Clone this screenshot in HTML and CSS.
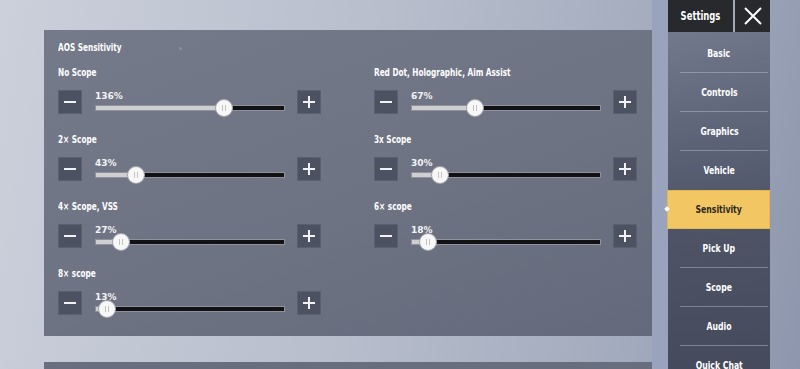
FILE: index.html
```html
<!DOCTYPE html>
<html>

<head>
    <meta charset="utf-8">
    <meta name="viewport" content="width=device-width, initial-scale=1">
    <title>Settings - Sensitivity</title>
    <link rel="stylesheet" href="styles.css">
</head>

<body>
    <div class="screen">
        <div class="main">
            <div class="panel">
                <div class="panel-title"><span class="narrow">AOS Sensitivity</span><span class="dot"></span></div>
                <div class="grid">
                    <div class="setting">
                        <div class="label">No Scope</div>
                        <div class="controls">
                            <button class="step minus"></button>
                            <div class="slider">
                                <span class="value">136%</span>
                                <div class="track"><div class="fill" style="width:68%"></div></div>
                                <span class="knob" style="left:68%"></span>
                            </div>
                            <button class="step plus"></button>
                        </div>
                    </div>
                    <div class="setting">
                        <div class="label">Red Dot, Holographic, Aim Assist</div>
                        <div class="controls">
                            <button class="step minus"></button>
                            <div class="slider">
                                <span class="value">67%</span>
                                <div class="track"><div class="fill" style="width:33.5%"></div></div>
                                <span class="knob" style="left:33.5%"></span>
                            </div>
                            <button class="step plus"></button>
                        </div>
                    </div>
                    <div class="setting">
                        <div class="label">2× Scope</div>
                        <div class="controls">
                            <button class="step minus"></button>
                            <div class="slider">
                                <span class="value">43%</span>
                                <div class="track"><div class="fill" style="width:21.5%"></div></div>
                                <span class="knob" style="left:21.5%"></span>
                            </div>
                            <button class="step plus"></button>
                        </div>
                    </div>
                    <div class="setting">
                        <div class="label">3x Scope</div>
                        <div class="controls">
                            <button class="step minus"></button>
                            <div class="slider">
                                <span class="value">30%</span>
                                <div class="track"><div class="fill" style="width:15%"></div></div>
                                <span class="knob" style="left:15%"></span>
                            </div>
                            <button class="step plus"></button>
                        </div>
                    </div>
                    <div class="setting">
                        <div class="label">4× Scope, VSS</div>
                        <div class="controls">
                            <button class="step minus"></button>
                            <div class="slider">
                                <span class="value">27%</span>
                                <div class="track"><div class="fill" style="width:13.5%"></div></div>
                                <span class="knob" style="left:13.5%"></span>
                            </div>
                            <button class="step plus"></button>
                        </div>
                    </div>
                    <div class="setting">
                        <div class="label">6× scope</div>
                        <div class="controls">
                            <button class="step minus"></button>
                            <div class="slider">
                                <span class="value">18%</span>
                                <div class="track"><div class="fill" style="width:9%"></div></div>
                                <span class="knob" style="left:9%"></span>
                            </div>
                            <button class="step plus"></button>
                        </div>
                    </div>
                    <div class="setting">
                        <div class="label">8× scope</div>
                        <div class="controls">
                            <button class="step minus"></button>
                            <div class="slider">
                                <span class="value">13%</span>
                                <div class="track"><div class="fill" style="width:6.5%"></div></div>
                                <span class="knob" style="left:6.5%"></span>
                            </div>
                            <button class="step plus"></button>
                        </div>
                    </div>
                </div>
            </div>
            <div class="panel next"></div>
        </div>

        <div class="sidebar">
            <div class="sidebar-head">
                <div class="tab"><span class="narrow">Settings</span></div>
                <button class="close">
                    <svg width="20" height="20" viewBox="0 0 20 20">
                        <path d="M2 2 L18 18 M18 2 L2 18" stroke="#fff" stroke-width="2" fill="none" />
                    </svg>
                </button>
            </div>
            <ul class="menu">
                <li><span class="narrow">Basic</span></li>
                <li><span class="narrow">Controls</span></li>
                <li><span class="narrow">Graphics</span></li>
                <li class="no-line"><span class="narrow">Vehicle</span></li>
                <li class="active no-line"><span class="narrow">Sensitivity</span></li>
                <li><span class="narrow">Pick Up</span></li>
                <li><span class="narrow">Scope</span></li>
                <li><span class="narrow">Audio</span></li>
                <li class="last"><span class="narrow">Quick Chat</span></li>
            </ul>
        </div>
    </div>
</body>

</html>
```

FILE: styles.css
```css
html,
body {
    margin: 0;
    height: 100%;
    overflow: hidden;
}

body {
    background: linear-gradient(100deg, #cbd0db 0%, #b8beCC 45%, #a2aabd 80%, #8e96ad 100%);
    color: #fff;
    font-family: "DejaVu Sans Condensed", "DejaVu Sans", sans-serif;
    font-stretch: condensed;
}

.screen {
    display: flex;
    height: 100%;
}

.narrow {
    display: inline-block;
    transform: scaleX(0.78);
}

.main {
    width: 608px;
    padding: 30px 16px 0 44px;
    display: flex;
    flex-direction: column;
    gap: 26px;
}

.panel {
    flex: none;
    height: 306px;
    box-sizing: border-box;
    padding: 12px 15px 0 14px;
    background: linear-gradient(160deg, #747a89 0%, #6d7383 55%, #646a7b 100%);
}

.panel.next {
    height: 40px;
    padding: 0;
    background: #686e7e;
}

.panel-title {
    font-size: 11px;
    font-weight: bold;
    line-height: 12px;
    height: 12px;
    margin-bottom: 12px;
}

.panel-title .narrow {
    transform-origin: left center;
    transform: scaleX(0.74);
}

.dot {
    display: inline-block;
    width: 3px;
    height: 3px;
    margin-left: 35px;
    border-radius: 50%;
    background: #8a90a0;
    vertical-align: middle;
}

.grid {
    display: grid;
    grid-template-columns: 263px 263px;
    column-gap: 53px;
    row-gap: 19px;
}

.label {
    font-size: 11px;
    font-weight: bold;
    line-height: 14px;
    height: 14px;
    margin-bottom: 10px;
    white-space: nowrap;
    transform-origin: left center;
    transform: scaleX(0.74);
}

.controls {
    display: flex;
    align-items: flex-start;
    height: 24px;
}

.step {
    position: relative;
    flex: none;
    width: 24px;
    height: 24px;
    padding: 0;
    border: 1px solid #5a6070;
    background: #4c5262;
    cursor: pointer;
}

.step::before,
.step.plus::after {
    content: "";
    position: absolute;
    left: 5px;
    top: 10px;
    width: 12px;
    height: 2px;
    background: #f2f2f2;
}

.step.plus::after {
    left: 10px;
    top: 5px;
    width: 2px;
    height: 12px;
}

.slider {
    position: relative;
    flex: none;
    width: 190px;
    height: 24px;
    margin: 0 12px 0 13px;
}

.value {
    display: block;
    font-family: "DejaVu Sans", sans-serif;
    font-stretch: normal;
    font-size: 9px;
    font-weight: bold;
    line-height: 12px;
    color: #f4f4f4;
}

.track {
    margin-top: 3px;
    height: 4px;
    border: 1px solid #8e929c;
    background: #121214;
}

.fill {
    height: 100%;
    background: #cfcfcf;
}

.knob {
    position: absolute;
    top: 9px;
    width: 16px;
    height: 16px;
    margin-left: -9px;
    border: 1px solid #9fa3ab;
    border-radius: 50%;
    background: #f7f7f7;
}

.knob::before {
    content: "";
    position: absolute;
    left: 6px;
    top: 5px;
    width: 2px;
    height: 6px;
    border-left: 1px solid #c2c2c2;
    border-right: 1px solid #c2c2c2;
}

.sidebar {
    width: 102px;
    display: flex;
    flex-direction: column;
    background: linear-gradient(180deg, rgba(84, 90, 110, 0.55) 0%, rgba(70, 76, 94, 0.9) 60%, #454b5c 100%);
    box-shadow: -16px 0 0 #9aa3bd;
}

.sidebar-head {
    display: flex;
    gap: 2px;
    height: 32px;
    background: #a3a9b8;
}

.tab {
    width: 65px;
    background: #28292d;
    font-size: 12px;
    font-weight: bold;
    line-height: 32px;
    text-align: center;
}

.close {
    flex: 1;
    padding: 0;
    border: none;
    background: #28292d;
    display: flex;
    align-items: center;
    justify-content: center;
}

.menu {
    list-style: none;
    margin: 0;
    padding: 2px 0 0;
}

.menu li {
    position: relative;
    height: 39px;
    line-height: 39px;
    text-align: center;
    font-size: 11px;
    font-weight: bold;
}

.menu li.last {
    height: 34px;
    line-height: 40px;
}

.menu li::after {
    content: "";
    position: absolute;
    left: 12px;
    right: 2px;
    bottom: 0;
    height: 1px;
    background: rgba(190, 196, 210, 0.45);
}

.menu li.no-line::after,
.menu li.last::after {
    display: none;
}

.menu li.active {
    margin-left: -1px;
    background: #f2c763;
    border: 1px solid #e6b650;
    height: 37px;
    line-height: 37px;
    color: #2a2722;
}

.menu li.active::before {
    content: "";
    position: absolute;
    left: -3px;
    top: 16px;
    width: 4px;
    height: 4px;
    background: #fff;
    transform: rotate(45deg);
}
```
